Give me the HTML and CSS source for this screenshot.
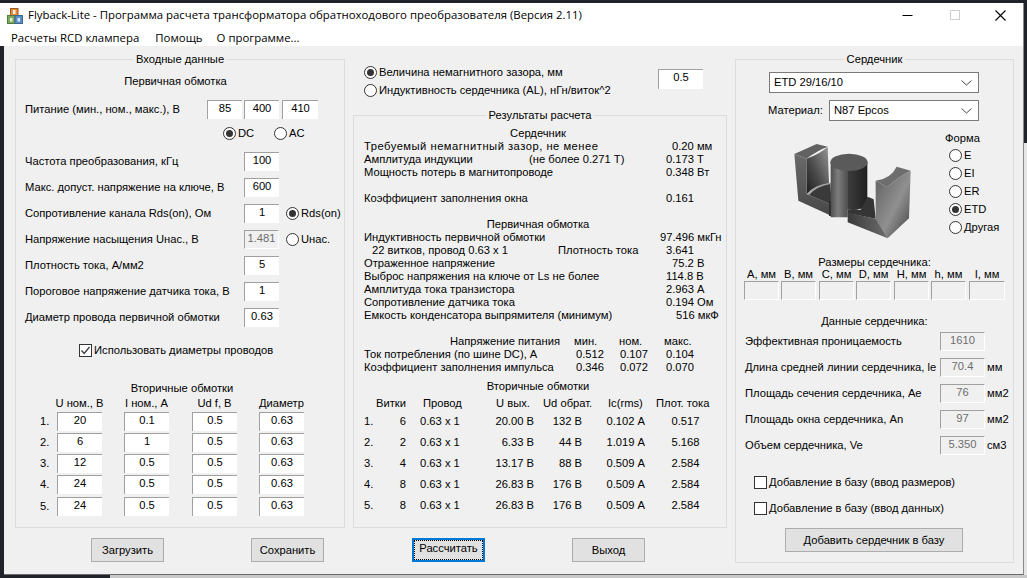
FILE: index.html
```html
<!DOCTYPE html>
<html lang="ru">
<head>
<meta charset="utf-8">
<title>Flyback-Lite</title>
<link rel="stylesheet" href="styles.css">
</head>
<body>
<div class="desk-right"></div>
<div class="desk-bottom"></div>
<div class="window">
  <div class="titlebar">
    <svg class="app-icon" viewBox="0 0 16 16" width="16" height="16">
      <rect x="3.5" y="0.5" width="7.5" height="7" fill="#e8883a" stroke="#9a5a20"/>
      <rect x="6" y="2" width="2.5" height="4" fill="#fff2d8"/>
      <rect x="0.5" y="7.5" width="7.5" height="8" fill="#7cab5c" stroke="#557a3e"/>
      <rect x="3" y="10" width="2.5" height="3.5" fill="#e2efd6"/>
      <rect x="8" y="7.5" width="7.5" height="8" fill="#5b8fc4" stroke="#3e6690"/>
      <rect x="10.5" y="10" width="2.5" height="3.5" fill="#dbe8f5"/>
    </svg>
    <span class="title-text">Flyback-Lite - Программа расчета трансформатора обратноходового преобразователя (Версия 2.11)</span>
    <div class="controls">
      <svg class="ctl" width="46" height="24" viewBox="0 0 46 24"><path d="M17.500 12.500H27.500" stroke="#000"/></svg>
      <svg class="ctl" width="46" height="24" viewBox="0 0 46 24"><rect x="19.500" y="7.500" width="9" height="9" fill="none" stroke="#cfcfcf"/></svg>
      <svg class="ctl" width="46" height="24" viewBox="0 0 46 24"><path d="M18.500 7.500L28.500 17.500M28.500 7.500L18.500 17.500" stroke="#000" stroke-width="1.100"/></svg>
    </div>
  </div>
  <div class="menubar"><span>Расчеты RCD клампера</span><span>Помощь</span><span class="menu-last">О программе...</span></div>
  <div class="client">
    <div class="col col-left">
      <fieldset class="group group-left">
        <legend>Входные данные</legend>
        <div class="center sub-first">Первичная обмотка</div>
        <div class="row-supply">
          <span class="lbl-supply">Питание (мин., ном., макс.), В</span>
          <div class="field f35">85</div><div class="field f35 ml2">400</div><div class="field f36 ml3">410</div>
        </div>
        <div class="row-dc">
          <span class="radio on"></span><span class="rt rt-dc">DC</span>
          <span class="radio"></span><span class="rt">AC</span>
        </div>
        <div class="params">
          <div class="param"><span class="lbl-param">Частота преобразования, кГц</span><div class="field f35">100</div></div>
          <div class="param"><span class="lbl-param">Макс. допуст. напряжение на ключе, В</span><div class="field f35">600</div></div>
          <div class="param"><span class="lbl-param">Сопротивление канала Rds(on), Ом</span><div class="field f35">1</div><span class="radio on side"></span><span class="rt">Rds(on)</span></div>
          <div class="param"><span class="lbl-param">Напряжение насыщения Uнас., В</span><div class="field f35 dis">1.481</div><span class="radio side"></span><span class="rt">Uнас.</span></div>
          <div class="param"><span class="lbl-param">Плотность тока, А/мм2</span><div class="field f35">5</div></div>
          <div class="param"><span class="lbl-param">Пороговое напряжение датчика тока, В</span><div class="field f35">1</div></div>
          <div class="param"><span class="lbl-param">Диаметр провода первичной обмотки</span><div class="field f35">0.63</div></div>
        </div>
        <div class="row-check">
          <span class="check"><svg width="11" height="11" viewBox="0 0 11 11"><path d="M1.500 5.500L4.200 8.500L9.500 2" fill="none" stroke="#444" stroke-width="1.400"/></svg></span>
          <span class="rt">Использовать диаметры проводов</span>
        </div>
        <div class="center sec-title">Вторичные обмотки</div>
        <div class="sec-head">
          <span class="hc">U ном., В</span><span class="hc m22">I ном., А</span><span class="hc m23">Ud f, В</span><span class="hc m22">Диаметр</span>
        </div>
        <div class="sec-row"><span class="num">1.</span><div class="field f45">20</div><div class="field f45 m22">0.1</div><div class="field f45 m23">0.5</div><div class="field f45 m22">0.63</div></div>
        <div class="sec-row"><span class="num">2.</span><div class="field f45">6</div><div class="field f45 m22">1</div><div class="field f45 m23">0.5</div><div class="field f45 m22">0.63</div></div>
        <div class="sec-row"><span class="num">3.</span><div class="field f45">12</div><div class="field f45 m22">0.5</div><div class="field f45 m23">0.5</div><div class="field f45 m22">0.63</div></div>
        <div class="sec-row"><span class="num">4.</span><div class="field f45">24</div><div class="field f45 m22">0.5</div><div class="field f45 m23">0.5</div><div class="field f45 m22">0.63</div></div>
        <div class="sec-row"><span class="num">5.</span><div class="field f45">24</div><div class="field f45 m22">0.5</div><div class="field f45 m23">0.5</div><div class="field f45 m22">0.63</div></div>
      </fieldset>
      <div class="buttons buttons-left"><button class="btn">Загрузить</button><button class="btn">Сохранить</button></div>
    </div>

    <div class="col col-mid">
      <div class="gap-top">
        <div class="gap-radios">
          <div class="radio-line"><span class="radio on"></span><span class="rt">Величина немагнитного зазора, мм</span></div>
          <div class="radio-line"><span class="radio"></span><span class="rt">Индуктивность сердечника (AL), нГн/виток^2</span></div>
        </div>
        <div class="field f45 gap-field">0.5</div>
      </div>
      <fieldset class="group group-mid">
        <legend>Результаты расчета</legend>
        <div class="res">
          <div class="r r-center">Сердечник</div>
          <div class="r"><span class="l l-wide">Требуемый немагнитный зазор, не менее</span><span class="v2">0.20 мм</span></div>
          <div class="r"><span class="l-a">Амплитуда индукции</span><span class="l-b">(не более 0.271 Т)</span><span class="v1">0.173 Т</span></div>
          <div class="r"><span class="l">Мощность потерь в магнитопроводе</span><span class="v1">0.348 Вт</span></div>
          <div class="r"></div>
          <div class="r"><span class="l">Коэффициент заполнения окна</span><span class="v1">0.161</span></div>
          <div class="r"></div>
          <div class="r r-center">Первичная обмотка</div>
          <div class="r"><span class="l">Индуктивность первичной обмотки</span><span>97.496 мкГн</span></div>
          <div class="r"><span class="l-c">22 витков, провод 0.63 х 1</span><span class="l-d">Плотность тока</span><span class="v1">3.641</span></div>
          <div class="r"><span class="l">Отраженное напряжение</span><span class="v2">75.2 В</span></div>
          <div class="r"><span class="l">Выброс напряжения на ключе от Ls не более</span><span class="v1">114.8 В</span></div>
          <div class="r"><span class="l">Амплитуда тока транзистора</span><span class="v1">2.963 А</span></div>
          <div class="r"><span class="l">Сопротивление датчика тока</span><span class="v1">0.194 Ом</span></div>
          <div class="r"><span class="l">Емкость конденсатора выпрямителя (минимум)</span><span class="v3">516 мкФ</span></div>
          <div class="r"></div>
          <div class="r"><span class="l-e">Напряжение питания</span><span class="w45">мин.</span><span class="w45">ном.</span><span>макс.</span></div>
          <div class="r"><span class="l-f">Ток потребления (по шине DC), А</span><span class="w44">0.512</span><span class="w46">0.107</span><span>0.104</span></div>
          <div class="r"><span class="l-f">Коэффициент заполнения импульса</span><span class="w44">0.346</span><span class="w46">0.072</span><span>0.070</span></div>
          <div class="r r-center r-sec">Вторичные обмотки</div>
          <div class="thead"><span>Витки</span><span>Провод</span><span>U вых.</span><span>Ud обрат.</span><span>Ic(rms)</span><span>Плот. тока</span></div>
          <div class="trow"><span>1.</span><span class="ar">6</span><span class="wire">0.63 x 1</span><span class="ar">20.00 В</span><span class="ar">132 В</span><span class="ar">0.102 А</span><span class="ac">0.517</span></div>
          <div class="trow"><span>2.</span><span class="ar">2</span><span class="wire">0.63 x 1</span><span class="ar">6.33 В</span><span class="ar">44 В</span><span class="ar">1.019 А</span><span class="ac">5.168</span></div>
          <div class="trow"><span>3.</span><span class="ar">4</span><span class="wire">0.63 x 1</span><span class="ar">13.17 В</span><span class="ar">88 В</span><span class="ar">0.509 А</span><span class="ac">2.584</span></div>
          <div class="trow"><span>4.</span><span class="ar">8</span><span class="wire">0.63 x 1</span><span class="ar">26.83 В</span><span class="ar">176 В</span><span class="ar">0.509 А</span><span class="ac">2.584</span></div>
          <div class="trow"><span>5.</span><span class="ar">8</span><span class="wire">0.63 x 1</span><span class="ar">26.83 В</span><span class="ar">176 В</span><span class="ar">0.509 А</span><span class="ac">2.584</span></div>
        </div>
      </fieldset>
      <div class="buttons buttons-mid"><button class="btn focus"><span>Рассчитать</span></button><button class="btn">Выход</button></div>
    </div>

    <div class="col col-right">
      <fieldset class="group group-right">
        <legend>Сердечник</legend>
        <div class="combo combo-core"><span>ETD 29/16/10</span><svg width="11" height="6" viewBox="0 0 11 6"><path d="M0.500 0.500L5.500 5L10.500 0.500" fill="none" stroke="#444"/></svg></div>
        <div class="mat-row"><span class="mat-label">Материал:</span><div class="combo combo-mat"><span>N87 Epcos</span><svg width="11" height="6" viewBox="0 0 11 6"><path d="M0.500 0.500L5.500 5L10.500 0.500" fill="none" stroke="#444"/></svg></div></div>
        <div class="shape-row">
          <svg class="core-pic" width="150" height="110" viewBox="0 0 450 330">
            <defs>
              <linearGradient id="g1" x1="0" y1="0" x2="0" y2="1"><stop offset="0" stop-color="#6a6a6a"/><stop offset="1" stop-color="#474747"/></linearGradient>
              <linearGradient id="g2" x1="0" y1="1" x2="1" y2="0"><stop offset="0" stop-color="#1c1c1c"/><stop offset="0.45" stop-color="#4d4d4d"/><stop offset="1" stop-color="#989898"/></linearGradient>
              <linearGradient id="g3" x1="0" y1="0" x2="1" y2="0"><stop offset="0" stop-color="#4e4e4e"/><stop offset="0.2" stop-color="#7d7d7d"/><stop offset="0.46" stop-color="#505050"/><stop offset="0.47" stop-color="#3c3c3c"/><stop offset="1" stop-color="#202020"/></linearGradient>
              <linearGradient id="g4" x1="0" y1="0" x2="1" y2="1"><stop offset="0" stop-color="#5e5e5e"/><stop offset="0.55" stop-color="#909090"/><stop offset="1" stop-color="#3f3f3f"/></linearGradient>
              <linearGradient id="g5" x1="0" y1="0" x2="1" y2="0"><stop offset="0" stop-color="#3a3a3a"/><stop offset="1" stop-color="#6d6d6d"/></linearGradient>
            </defs>
            <path d="M28,72 L95,42 L128,50 Q100,60 64,86 Z" fill="#626262"/>
            <path d="M64,86 Q105,72 128,50 L132,160 Q90,165 65,192 Z" fill="url(#g2)"/>
            <polygon points="28,72 64,86 65,192 140,224 140,258 40,212" fill="url(#g1)"/>
            <path d="M65,192 Q90,165 136,158 L140,224 Z" fill="#3a3a3a"/>
            <path d="M65,192 Q90,165 136,158 L136,162 Q96,168 72,195 Z" fill="#a8a8a8"/>
            <rect x="132" y="214" width="8" height="44" fill="#2a2a2a"/>
            <path d="M137,97 L137,262 L188,262 L188,238 Q220,246 247,225 L247,97 Z" fill="url(#g3)"/>
            <ellipse cx="192" cy="97" rx="56" ry="26" fill="#5a5a5a"/>
            <polygon points="188,238 226,240 248,200 266,208 272,266 188,250" fill="#353535"/>
            <path d="M272,152 Q318,146 335,110 L377,122 Q340,140 306,172 Z" fill="#6e6e6e"/>
            <path d="M272,152 L306,172 Q340,140 377,122 L372,265 L308,325 L272,268 Z" fill="url(#g4)"/>
            <polygon points="188,248 272,266 308,325 188,277" fill="url(#g5)"/>
          </svg>
          <div class="shapes">
            <div class="shapes-title">Форма</div>
            <div class="radio-line"><span class="radio"></span><span class="rt">E</span></div>
            <div class="radio-line"><span class="radio"></span><span class="rt">EI</span></div>
            <div class="radio-line"><span class="radio"></span><span class="rt">ER</span></div>
            <div class="radio-line"><span class="radio on"></span><span class="rt">ETD</span></div>
            <div class="radio-line"><span class="radio"></span><span class="rt">Другая</span></div>
          </div>
        </div>
        <div class="center dim-title">Размеры сердечника:</div>
        <div class="dims">
          <div class="dim"><span>A, мм</span><div class="field f35 dis"></div></div>
          <div class="dim ml2"><span>B, мм</span><div class="field f35 dis"></div></div>
          <div class="dim ml3"><span>C, мм</span><div class="field f35 dis"></div></div>
          <div class="dim ml2"><span>D, мм</span><div class="field f35 dis"></div></div>
          <div class="dim ml3"><span>H, мм</span><div class="field f35 dis"></div></div>
          <div class="dim ml2"><span>h, мм</span><div class="field f35 dis"></div></div>
          <div class="dim ml3"><span>I, мм</span><div class="field f36 dis"></div></div>
        </div>
        <div class="center data-title">Данные сердечника:</div>
        <div class="core-data">
          <div class="cd"><span class="cd-l">Эффективная проницаемость</span><div class="field f45 dis">1610</div></div>
          <div class="cd"><span class="cd-l">Длина средней линии сердечника, le</span><div class="field f45 dis">70.4</div><span class="unit">мм</span></div>
          <div class="cd"><span class="cd-l">Площадь сечения сердечника, Ae</span><div class="field f45 dis">76</div><span class="unit">мм2</span></div>
          <div class="cd"><span class="cd-l">Площадь окна сердечника, An</span><div class="field f45 dis">97</div><span class="unit">мм2</span></div>
          <div class="cd"><span class="cd-l">Объем сердечника, Ve</span><div class="field f45 dis">5.350</div><span class="unit">см3</span></div>
        </div>
        <div class="add-check add-first"><span class="check"></span><span class="rt">Добавление в базу (ввод размеров)</span></div>
        <div class="add-check"><span class="check"></span><span class="rt">Добавление в базу (ввод данных)</span></div>
        <button class="btn btn-add">Добавить сердечник в базу</button>
      </fieldset>
    </div>
  </div>
</div>
</body>
</html>
```

FILE: styles.css
```css
* { box-sizing: border-box; }
html, body { margin: 0; padding: 0; }
body {
  width: 1027px;
  height: 578px;
  overflow: hidden;
  background: #20232a;
  font: 11.2px/13px "Liberation Sans", Arial, sans-serif;
  color: #000;
  position: relative;
  padding: 3px 0 0 4px;
}
.desk-right { position: absolute; left: 1024px; top: 143px; width: 3px; height: 435px; background: #e6e6e6; }
.desk-bottom { position: absolute; left: 110px; top: 575px; width: 917px; height: 3px; background: #c9c9c9; }
.window { position: relative; width: 1020px; height: 572px; background: #f0f0f0; border-right: 1px solid #8a8a8a; border-bottom: 1px solid #6a6a6a; }

.titlebar { display: flex; align-items: center; height: 24px; margin-left: -4px; background: #fff; font: 11.4px/16px "Open Sans", sans-serif; }
.app-icon { margin: 2px 0 0 7px; }
.title-text { margin-left: 5px; white-space: nowrap; }
.controls { display: flex; margin-left: auto; }
.ctl { display: block; }
.menubar { display: flex; gap: 16px; height: 19px; margin-left: -4px; padding-left: 11px; background: #fff; font: 11.4px/22px "Open Sans", sans-serif; white-space: nowrap; }
.menu-last { margin-left: -2px; }

.client { display: flex; padding: 6px 0 0 11px; height: 527px; }
.col { flex: none; }
.col-left { width: 330px; }
.col-mid { width: 374px; margin-left: 8px; }
.col-right { width: 279px; margin-left: 8px; }

.group { margin: 0; padding: 0; min-width: 0; border: 1px solid #dcdcdc; display: block; }
.group legend { margin: 0 auto; padding: 0 3px; line-height: 14px; font-size: 11.2px; }
.group-left { height: 476px; }
.group-mid { height: 420px; }
.group-right { height: 511px; }

.center { text-align: center; line-height: 14px; }
.sub-first { margin-top: 8px; padding-right: 9px; }

.field { flex: none; height: 19px; background: #fff; border-top: 1px solid #a0a0a0; border-left: 1px solid #a0a0a0; text-align: center; line-height: 15px; white-space: nowrap; }
.field.dis { background: #f0f0f0; border-right: 1px solid #fff; border-bottom: 1px solid #fff; color: #6d6d6d; }
.f35 { width: 35px; }
.f36 { width: 36px; }
.f45 { width: 45px; }
.ml2 { margin-left: 2px; }
.ml3 { margin-left: 3px; }
.m22 { margin-left: 22px; }
.m23 { margin-left: 23px; }

.radio { flex: none; display: inline-grid; place-items: center; width: 13px; height: 13px; border: 1px solid #333; border-radius: 50%; background: #fff; }
.radio.on::after { content: ""; width: 7px; height: 7px; border-radius: 50%; background: #333; }
.rt { margin-left: 2px; white-space: nowrap; }
.check { flex: none; display: inline-grid; place-items: center; width: 13px; height: 13px; border: 1px solid #333; background: #fff; }

.row-supply { display: flex; align-items: center; height: 19px; margin-top: 12px; padding-left: 9px; }
.lbl-supply { width: 182px; white-space: nowrap; }
.row-dc { display: flex; align-items: center; height: 13px; margin-top: 8px; padding-left: 207px; }
.rt-dc { width: 36px; }
.params { display: flex; flex-direction: column; gap: 7px; margin-top: 12px; padding-left: 9px; }
.param { display: flex; align-items: center; height: 19px; }
.lbl-param { width: 219px; white-space: nowrap; }
.side { margin-left: 7px; }
.row-check { display: flex; align-items: center; height: 13px; margin-top: 17px; padding-left: 63px; }
.sec-title { margin-top: 24px; padding-left: 4px; }
.sec-head { display: flex; height: 13px; margin-top: 2px; padding-left: 41px; line-height: 13px; }
.hc { flex: none; width: 45px; display: flex; justify-content: center; white-space: nowrap; }
.sec-row { display: flex; align-items: center; margin-top: 2px; padding-left: 24px; }
.sec-row:last-child { margin-top: 3px; }
.num { width: 17px; }

.buttons { display: flex; gap: 87px; margin-top: 10px; }
.buttons-left { padding-left: 76px; }
.buttons-mid { padding-left: 59px; }
.btn { display: block; flex: none; width: 73px; height: 24px; padding: 0; background: #e1e1e1; border: 1px solid #adadad; border-radius: 0; font: 11.2px/14px "Liberation Sans", Arial, sans-serif; color: #000; }
.btn.focus { border: 2px solid #0078d7; }
.btn.focus span { display: block; height: 100%; line-height: 17px; outline: 1px dotted #000; outline-offset: -1px; }
.btn-add { width: 178px; margin: 13px 0 0 49px; }

.gap-top { display: flex; height: 56px; }
.gap-radios { display: flex; flex-direction: column; gap: 5px; padding: 14px 0 0 11px; }
.radio-line { display: flex; align-items: center; height: 13px; }
.gap-field { height: 20px; margin: 17px 24px 0 auto; }

.res { padding: 5px 0 0 10px; }
.r { display: flex; height: 13px; white-space: nowrap; }
.r-center { justify-content: center; padding-right: 14px; }
.r-sec { margin-top: 6px; }
.l { width: 296px; }
.l-wide { letter-spacing: 0.5px; }
.l-a { width: 165px; }
.l-b { width: 131px; }
.l-c { width: 194px; padding-left: 8px; }
.l-d { width: 102px; }
.l-e { width: 210px; padding-left: 86px; }
.l-f { width: 212px; }
.w44 { width: 44px; }
.w45 { width: 45px; }
.w46 { width: 46px; }
.v1 { margin-left: 6px; }
.v2 { margin-left: 12px; }
.v3 { margin-left: 16px; }
.thead { display: grid; grid-template-columns: 47px 73px 47px 65px 48px auto; height: 13px; margin-top: 4px; padding-left: 12px; white-space: nowrap; }
.trow { display: grid; grid-template-columns: 20px 22px 78px 50px 48px 63px 81px; align-items: center; height: 21px; white-space: nowrap; }
.thead + .trow { margin-top: 1px; }
.ar { text-align: right; }
.ac { text-align: center; }
.wire { padding-left: 14px; }

.combo { display: flex; align-items: center; justify-content: space-between; height: 21px; padding: 0 6px 0 4px; background: #fff; border: 1px solid #7a7a7a; white-space: nowrap; }
.combo-core { width: 210px; margin: 6px 0 0 33px; }
.mat-row { display: flex; align-items: center; margin: 7px 0 0 32px; }
.mat-label { width: 61px; }
.combo-mat { width: 150px; }
.shape-row { display: flex; margin-top: 8px; height: 118px; }
.core-pic { display: block; margin: 1px 0 0 49px; }
.shapes { margin: 2px 0 0 10px; }
.shapes-title { height: 14px; margin-bottom: 4px; line-height: 14px; }
.shapes .radio-line { margin: 0 0 5px 4px; }
.dim-title { margin-top: 9px; line-height: 13px; }
.dims { display: flex; padding-left: 8px; }
.dim { display: flex; flex-direction: column; align-items: center; line-height: 12px; }
.dim span { margin-top: -2px; line-height: 14px; }
.data-title { margin-top: 15px; line-height: 13px; }
.core-data { display: flex; flex-direction: column; gap: 7px; margin-top: 4px; padding-left: 9px; }
.cd { display: flex; align-items: center; height: 19px; white-space: nowrap; }
.cd-l { width: 195px; }
.unit { margin-left: 2px; }
.add-check { display: flex; align-items: center; height: 13px; margin-top: 13px; padding-left: 18px; }
.add-first { margin-top: 21px; }
```
